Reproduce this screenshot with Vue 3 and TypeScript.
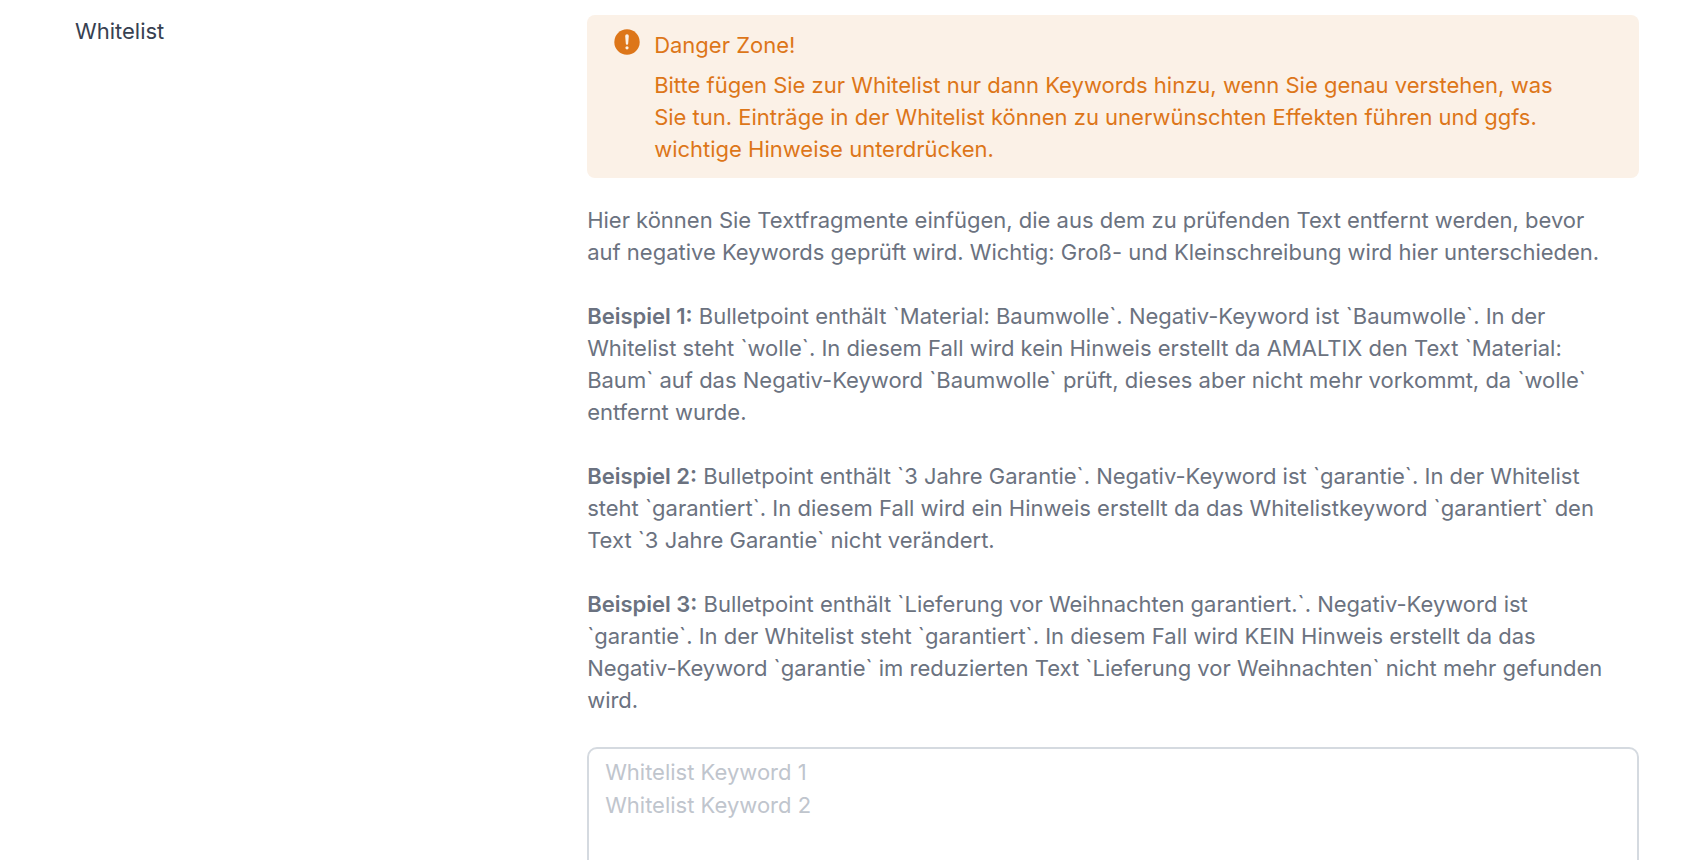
<script setup lang="ts">
import { ref } from 'vue'

interface Example {
  title: string
  text: string
}

const keywords = ref('')
const placeholder = 'Whitelist Keyword 1\nWhitelist Keyword 2'

const intro =
  'Hier können Sie Textfragmente einfügen, die aus dem zu prüfenden Text entfernt werden, bevor\n' +
  'auf negative Keywords geprüft wird. Wichtig: Groß- und Kleinschreibung wird hier unterschieden.'

const examples: Example[] = [
  {
    title: 'Beispiel 1:',
    text:
      'Bulletpoint enthält `Material: Baumwolle`. Negativ-Keyword ist `Baumwolle`. In der\n' +
      'Whitelist steht `wolle`. In diesem Fall wird kein Hinweis erstellt da AMALTIX den Text `Material:\n' +
      'Baum` auf das Negativ-Keyword `Baumwolle` prüft, dieses aber nicht mehr vorkommt, da `wolle`\n' +
      'entfernt wurde.',
  },
  {
    title: 'Beispiel 2:',
    text:
      'Bulletpoint enthält `3 Jahre Garantie`. Negativ-Keyword ist `garantie`. In der Whitelist\n' +
      'steht `garantiert`. In diesem Fall wird ein Hinweis erstellt da das Whitelistkeyword `garantiert` den\n' +
      'Text `3 Jahre Garantie` nicht verändert.',
  },
  {
    title: 'Beispiel 3:',
    text:
      'Bulletpoint enthält `Lieferung vor Weihnachten garantiert.`. Negativ-Keyword ist\n' +
      '`garantie`. In der Whitelist steht `garantiert`. In diesem Fall wird KEIN Hinweis erstellt da das\n' +
      'Negativ-Keyword `garantie` im reduzierten Text `Lieferung vor Weihnachten` nicht mehr gefunden\n' +
      'wird.',
  },
]
</script>

<template>
  <section class="row">
    <label class="label" for="whitelist">Whitelist</label>
    <div class="content">
      <div class="alert" role="alert">
        <svg class="icon" viewBox="0 0 26 26" aria-hidden="true">
          <circle cx="13" cy="13" r="12.7" fill="#dd7619" />
          <path d="M11.2 7a1.8 1.8 0 0 1 3.6 0l-.6 7.6a1.2 1.2 0 0 1-2.4 0z" fill="#fbf1e7" />
          <circle cx="13" cy="18.8" r="1.6" fill="#fbf1e7" />
        </svg>
        <div class="message">
          <p class="title">Danger Zone!</p>
          <p>
            Bitte fügen Sie zur Whitelist nur dann Keywords hinzu, wenn Sie genau verstehen, was Sie
            tun. Einträge in der Whitelist können zu unerwünschten Effekten führen und ggfs. wichtige
            Hinweise unterdrücken.
          </p>
        </div>
      </div>
      <div class="help">
        <p>{{ intro }}</p>
        <p v-for="example in examples" :key="example.title">
          <strong>{{ example.title }}</strong> {{ example.text }}
        </p>
      </div>
      <textarea id="whitelist" v-model="keywords" rows="6" :placeholder="placeholder"></textarea>
    </div>
  </section>
</template>

<style>
html {
  overflow: hidden;
}

body {
  margin: 0;
  height: 100vh;
  overflow: hidden;
  background: #fff;
}
</style>

<style scoped>
.row {
  display: grid;
  grid-template-columns: minmax(0, 5fr) minmax(0, 11fr);
  column-gap: 34px;
  padding: 15px 65px 32px 75px;
  font-family: Inter, "Liberation Sans", sans-serif;
  font-size: 22px;
  line-height: 32px;
  color: #374151;
}

p {
  margin: 0;
}

.alert {
  display: flex;
  gap: 14px;
  padding: 14px 60px 13px 27px;
  border-radius: 8px;
  background: #fbf1e7;
  color: #dd7619;
}

.icon {
  flex: none;
  width: 26px;
  height: 26px;
}

.title {
  margin-bottom: 8px;
}

.help {
  display: grid;
  gap: 32px;
  margin: 26px 0 31px;
  color: #6b7280;
  white-space: pre-line;
}

strong {
  font-weight: 600;
}

textarea {
  display: block;
  box-sizing: border-box;
  width: 100%;
  padding: 7px 16px;
  border: 2px solid #d5dae0;
  border-radius: 10px;
  background: #fff;
  font: inherit;
  line-height: 33px;
  color: #374151;
  resize: none;
}

textarea::placeholder {
  color: #c0c5cd;
  opacity: 1;
}
</style>
